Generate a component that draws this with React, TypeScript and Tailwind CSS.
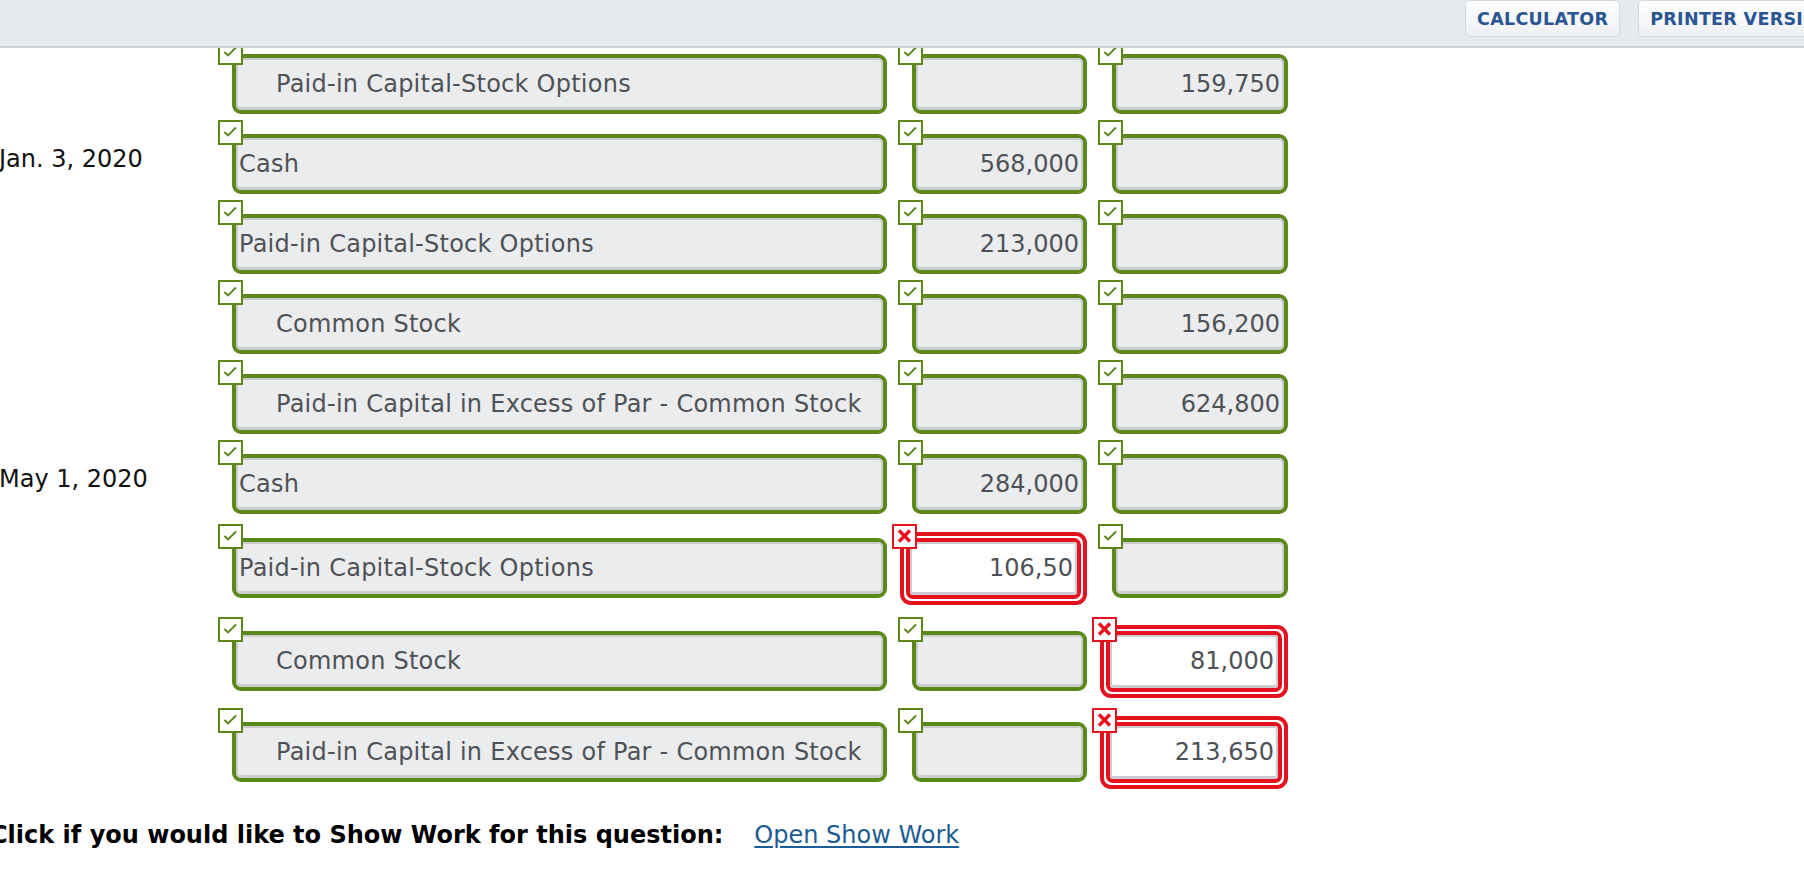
import React from 'react';

type Cell = { value: string; wrong?: boolean };

interface EntryRow {
  date?: string;
  account: string;
  indent?: boolean;
  debit: Cell;
  credit: Cell;
  height: string;
}

const rows: EntryRow[] = [
  { account: 'Paid-in Capital-Stock Options', indent: true, debit: { value: '' }, credit: { value: '159,750' }, height: 'h-[80px]' },
  { date: 'Jan. 3, 2020', account: 'Cash', debit: { value: '568,000' }, credit: { value: '' }, height: 'h-[80px]' },
  { account: 'Paid-in Capital-Stock Options', debit: { value: '213,000' }, credit: { value: '' }, height: 'h-[80px]' },
  { account: 'Common Stock', indent: true, debit: { value: '' }, credit: { value: '156,200' }, height: 'h-[80px]' },
  { account: 'Paid-in Capital in Excess of Par - Common Stock', indent: true, debit: { value: '' }, credit: { value: '624,800' }, height: 'h-[80px]' },
  { date: 'May 1, 2020', account: 'Cash', debit: { value: '284,000' }, credit: { value: '' }, height: 'h-[84px]' },
  { account: 'Paid-in Capital-Stock Options', debit: { value: '106,50', wrong: true }, credit: { value: '' }, height: 'h-[93px]' },
  { account: 'Common Stock', indent: true, debit: { value: '' }, credit: { value: '81,000', wrong: true }, height: 'h-[91px]' },
  { account: 'Paid-in Capital in Excess of Par - Common Stock', indent: true, debit: { value: '' }, credit: { value: '213,650', wrong: true }, height: 'h-[112px]' },
];

const Mark = ({ wrong, pos }: { wrong?: boolean; pos: string }) => (
  <span
    className={`absolute ${pos} z-10 w-[25px] h-[25px] bg-white border-2 ${wrong ? 'border-[#e3121e]' : 'border-[#5b8818]'}`}
  >
    <svg viewBox="0 0 21 21" className="w-full h-full">
      {wrong ? (
        <path d="M5 4.5 L16 15.5 M16 4.5 L5 15.5" stroke="#e3121e" strokeWidth="3.4" fill="none" />
      ) : (
        <path d="M4.5 10 L8 13.5 L16 5.5" stroke="#5b8818" strokeWidth="1.9" fill="none" />
      )}
    </svg>
  </span>
);

const Field = ({ text, width, align, indent }: { text: string; width: string; align: 'left' | 'right'; indent?: boolean }) => (
  <div className={`relative ${width} pt-[14px]`}>
    <Mark pos="left-[-14px] top-0" />
    <div className="h-[60px] border-4 border-[#5b8818] rounded-[9px]">
      <div
        className={`h-full flex items-center border-2 border-b-[3px] border-[#cbccce] rounded-[5px] bg-[#ebecee] text-[#4e5257] whitespace-nowrap ${
          align === 'right' ? 'justify-end pr-[2px]' : indent ? 'pl-[38px] tracking-[0.25px]' : 'pl-[1px] tracking-[0.25px]'
        }`}
      >
        {text}
      </div>
    </div>
  </div>
);

const WrongField = ({ text, width }: { text: string; width: string }) => (
  <div className={`${width} pt-[8px]`}>
    <div className="relative ml-[-12px] h-[73px]">
      <Mark wrong pos="left-[-8px] top-[-8px]" />
      <div className="h-full border-4 border-[#e3121e] rounded-[11px] bg-white p-[2px]">
        <div className="h-full border-4 border-[#e3121e] rounded-[7px]">
          <div className="h-full flex items-center justify-end pr-[2px] border-2 border-b-[3px] border-[#cbccce] rounded-[4px] bg-white text-[#4e5257]">
            {text}
          </div>
        </div>
      </div>
    </div>
  </div>
);

const Amount = ({ cell, width }: { cell: Cell; width: string }) =>
  cell.wrong ? <WrongField text={cell.value} width={width} /> : <Field text={cell.value} width={width} align="right" />;

export default function App() {
  return (
    <div className="relative w-[1804px] h-[874px] overflow-hidden bg-white font-['DejaVu_Sans',Verdana,sans-serif] text-[24px] leading-[30px]">
      <div className="absolute top-0 left-0 right-0 z-20 h-[48px] bg-[#e7ebef] border-b-2 border-[#c9d1da] flex items-start gap-[18px] pl-[1465px] overflow-hidden">
        <button className="shrink-0 h-[37px] px-[11px] rounded-[5px] border border-[#d2d9e1] bg-gradient-to-b from-white to-[#edf0f4] text-[#2a5592] font-bold text-[17.5px] tracking-[0.3px]">
          CALCULATOR
        </button>
        <button className="shrink-0 h-[37px] px-[11px] rounded-[5px] border border-[#d2d9e1] bg-gradient-to-b from-white to-[#edf0f4] text-[#2a5592] font-bold text-[17.5px] tracking-[0.3px] whitespace-nowrap">
          PRINTER VERSION
        </button>
      </div>

      <div className="pt-[40px]">
        {rows.map((row, i) => (
          <div key={i} className={`flex items-start ${row.height}`}>
            <div className="w-[232px] shrink-0 pt-[24px] ml-[-1px] mr-[1px] text-[#111] whitespace-nowrap">{row.date}</div>
            <div className="flex items-start gap-[25px]">
              <Field text={row.account} width="w-[655px]" align="left" indent={row.indent} />
              <Amount cell={row.debit} width="w-[175px]" />
              <Amount cell={row.credit} width="w-[176px]" />
            </div>
          </div>
        ))}
        <div className="flex items-center ml-[-10px] whitespace-nowrap">
          <span className="font-bold text-black">Click if you would like to Show Work for this question:</span>
          <a href="#" className="ml-[31px] text-[#1d5c95] underline underline-offset-[3px]">
            Open Show Work
          </a>
        </div>
      </div>
    </div>
  );
}
